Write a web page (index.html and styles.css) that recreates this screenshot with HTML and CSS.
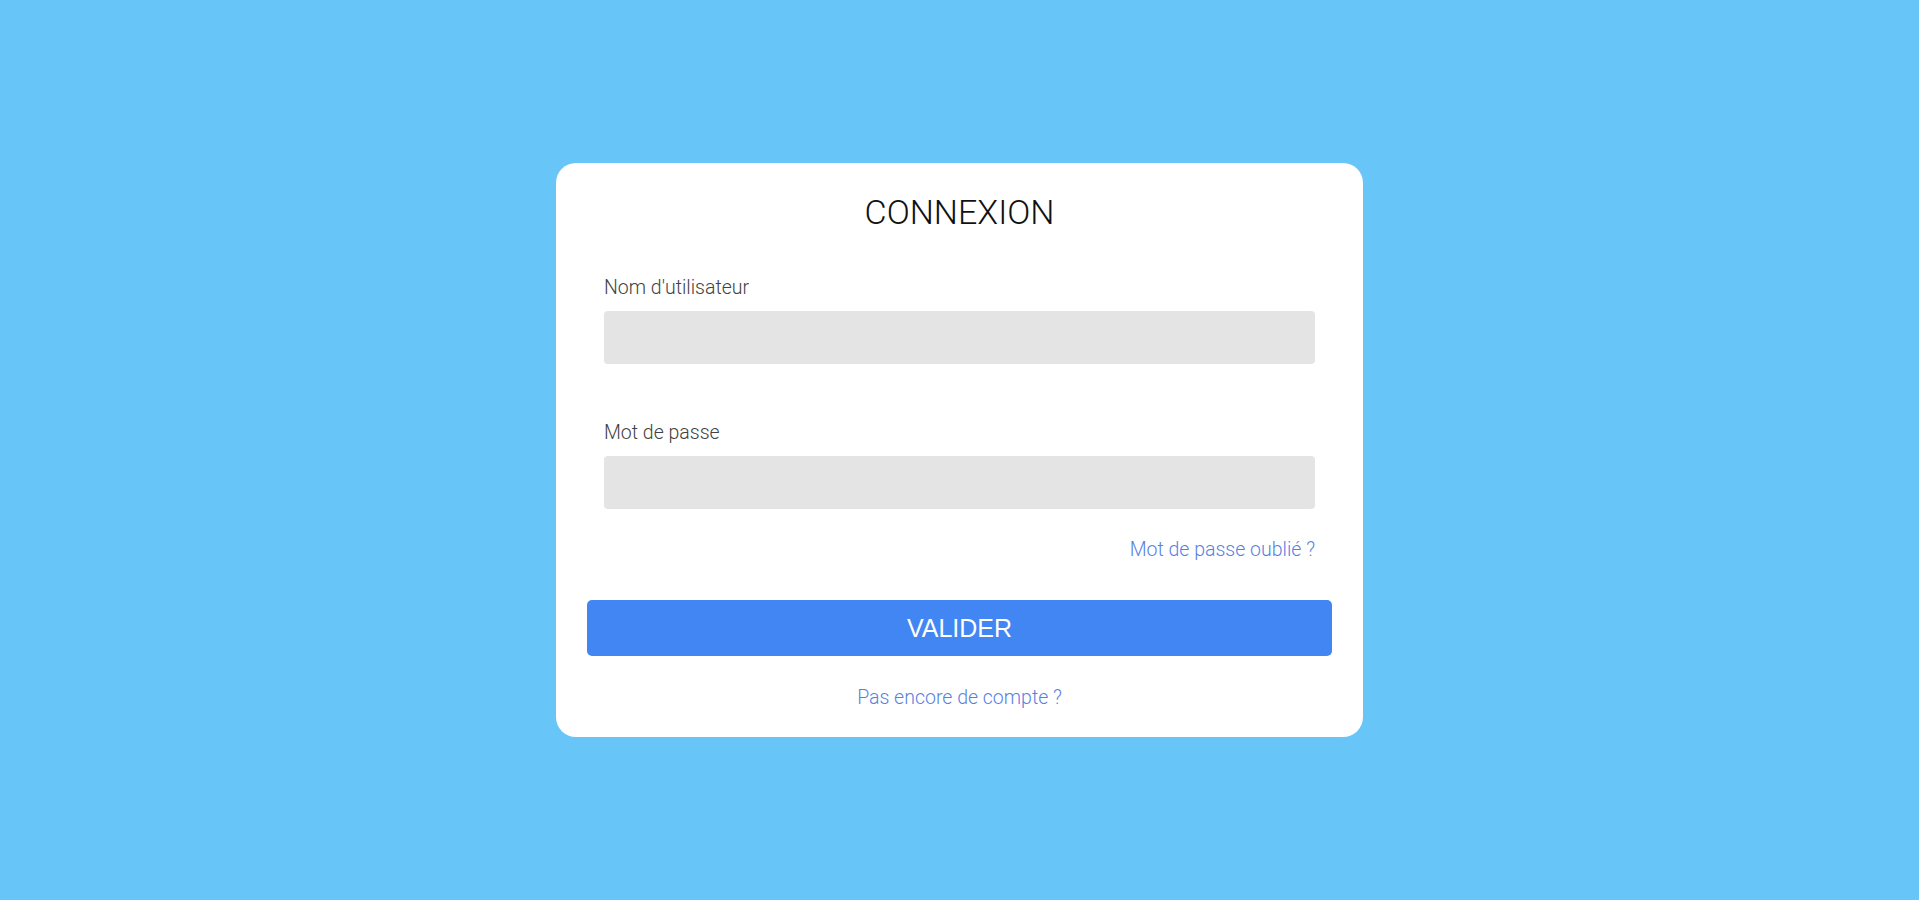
FILE: index.html
```html
<!DOCTYPE html>
<html lang="fr">
<head>
<meta charset="utf-8">
<title>Connexion</title>
<link rel="stylesheet" href="styles.css">
</head>
<body>
<main class="page">
  <form class="card">
    <h1 class="title">CONNEXION</h1>
    <div class="field">
      <label class="label" for="user">Nom d'utilisateur</label>
      <input class="input" id="user" type="text">
    </div>
    <div class="field field-second">
      <label class="label" for="pass">Mot de passe</label>
      <input class="input" id="pass" type="password">
    </div>
    <div class="forgot-row">
      <a class="link" href="#">Mot de passe oublié ?</a>
    </div>
    <button class="submit" type="button">VALIDER</button>
    <div class="signup-row">
      <a class="link" href="#">Pas encore de compte ?</a>
    </div>
  </form>
</main>
</body>
</html>
```
FILE: styles.css
```css
html, body {
  margin: 0;
  padding: 0;
}
body {
  background: #67c5f8;
  font-family: Roboto, "Liberation Sans", sans-serif;
}
.page {
  height: 900px;
  display: flex;
  align-items: center;
  justify-content: center;
}
.card {
  box-sizing: border-box;
  width: 807px;
  height: 574px;
  background: #ffffff;
  border-radius: 20px;
  padding: 30px 31px 0 31px;
  display: flex;
  flex-direction: column;
}
.title {
  margin: 0;
  font-size: 34px;
  line-height: 38px;
  font-weight: 300;
  color: #111;
  text-align: center;
}
.field {
  display: flex;
  flex-direction: column;
  margin: 45px 17px 0 17px;
}
.field-second {
  margin-top: 57px;
}
.label {
  font-size: 19.5px;
  line-height: 24px;
  font-weight: 300;
  color: #424242;
}
.input {
  margin-top: 11px;
  height: 53px;
  box-sizing: border-box;
  border: none;
  border-radius: 4px;
  background: #e4e4e4;
  outline: none;
}
.forgot-row {
  margin: 29px 17px 0 17px;
  display: flex;
  justify-content: flex-end;
  line-height: 24px;
}
.link {
  font-size: 19.5px;
  font-weight: 300;
  color: #5a7fe2;
  text-decoration: none;
}
.submit {
  margin-top: 38px;
  height: 56px;
  border: none;
  border-radius: 5px;
  background: #4286f4;
  color: #ffffff;
  font-family: "Liberation Sans", Arial, sans-serif;
  font-size: 25px;
  padding: 0;
}
.signup-row {
  margin-top: 30px;
  display: flex;
  justify-content: center;
  line-height: 24px;
}
```
